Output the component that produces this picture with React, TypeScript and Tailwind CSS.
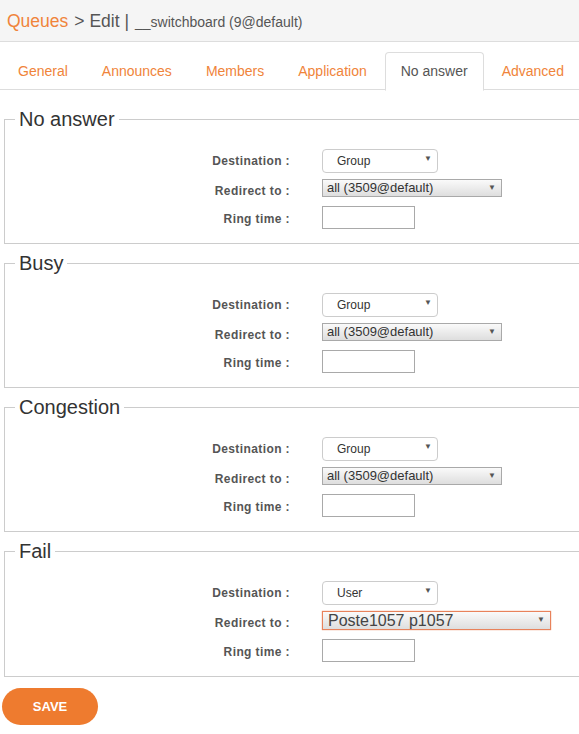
import React from "react";

const tabs = ["General", "Announces", "Members", "Application", "No answer", "Advanced"];

type Section = {
  title: string;
  destination: string;
  redirect: string;
  highlight?: boolean;
};

const sections: Section[] = [
  { title: "No answer", destination: "Group", redirect: "all (3509@default)" },
  { title: "Busy", destination: "Group", redirect: "all (3509@default)" },
  { title: "Congestion", destination: "Group", redirect: "all (3509@default)" },
  { title: "Fail", destination: "User", redirect: "Poste1057 p1057", highlight: true },
];

function Label({ children, className = "" }: { children: React.ReactNode; className?: string }) {
  return (
    <div
      className={
        "w-[276px] shrink-0 text-right text-[12px] leading-[18px] font-bold tracking-[0.4px] text-[#555] pr-[1px] " +
        className
      }
    >
      {children}
    </div>
  );
}

function Fieldset({ section }: { section: Section }) {
  return (
    <fieldset className="w-[600px] ml-[4px] border border-[#ccc] px-[10px] pt-[19px] pb-[14px]">
      <legend className="px-[4px] text-[20px] leading-[22px] text-[#333]">{section.title}</legend>

      {/* Destination */}
      <div className="flex items-center h-[24px]">
        <Label>Destination :</Label>
        <div className="ml-[31px] relative w-[116px] h-[24px] rounded-[4px] border border-[#ccc] bg-white flex items-center pl-[14px] text-[12px] text-[#333]">
          {section.destination}
          <span className="absolute right-[5px] top-[3px] text-[8px] text-[#555]">▼</span>
        </div>
      </div>

      {/* Redirect */}
      <div className={section.highlight ? "flex items-start h-[19px] mt-[6px]" : "flex items-start h-[18px] mt-[6px]"}>
        <Label className="mt-[3px]">Redirect to :</Label>
        <div
          className={
            section.highlight
              ? "ml-[31px] relative w-[229px] h-[19px] border border-[#e8825b] shadow-[0_0_1px_#e8825b] bg-gradient-to-b from-[#fafafa] to-[#dedede] flex items-center pl-[5px] text-[16px] text-[#444]"
              : "ml-[31px] relative w-[180px] h-[18px] border border-[#a9a9a9] bg-gradient-to-b from-[#fafafa] to-[#dedede] flex items-center pl-[4px] text-[13px] text-[#333]"
          }
        >
          {section.redirect}
          <span className="absolute right-[5px] top-[2px] text-[8px] text-[#555]">▼</span>
        </div>
      </div>

      {/* Ring time */}
      <div className="flex items-start h-[23px] mt-[9px]">
        <Label className="mt-[4px]">Ring time :</Label>
        <input
          type="text"
          className="ml-[31px] w-[93px] h-[23px] border border-[#a9a9a9] bg-white outline-none"
        />
      </div>
    </fieldset>
  );
}

export default function App() {
  return (
    <div className="min-h-screen w-full overflow-x-hidden bg-white font-['Liberation_Sans',Arial,sans-serif]">
      {/* Header */}
      <div className="h-[42px] bg-[#f5f5f5] border-b border-[#ddd] flex items-center pl-[7px] pt-[1px]">
        <span className="text-[17.5px] text-[#f0843a]">Queues</span>
        <span className="text-[17.5px] text-[#555] ml-[6px]">&gt; Edit |</span>
        <span className="text-[14px] text-[#555] ml-[6px] mt-[2px]">__switchboard (9@default)</span>
      </div>

      {/* Tabs */}
      <div className="mt-[10px] pl-[2px] flex border-b border-[#ddd] h-[38px]">
        {tabs.map((t) => {
          const active = t === "No answer";
          return (
            <div
              key={t}
              className={
                active
                  ? "shrink-0 whitespace-nowrap mr-[2px] px-[15px] h-[39px] flex items-center text-[14px] text-[#555] bg-white border border-[#ddd] border-b-white rounded-t-[4px]"
                  : "shrink-0 whitespace-nowrap mr-[2px] px-[15px] h-[38px] flex items-center text-[14px] text-[#f0843a] border border-transparent"
              }
            >
              {t}
            </div>
          );
        })}
      </div>

      {/* Sections */}
      <div className="mt-[18px] flex flex-col gap-[8px]">
        {sections.map((s) => (
          <Fieldset key={s.title} section={s} />
        ))}
      </div>

      <button
        type="button"
        className="mt-[11px] ml-[2px] w-[96px] h-[37px] rounded-full bg-[#ee7b2f] text-white text-[13px] font-bold"
      >
        SAVE
      </button>
    </div>
  );
}
